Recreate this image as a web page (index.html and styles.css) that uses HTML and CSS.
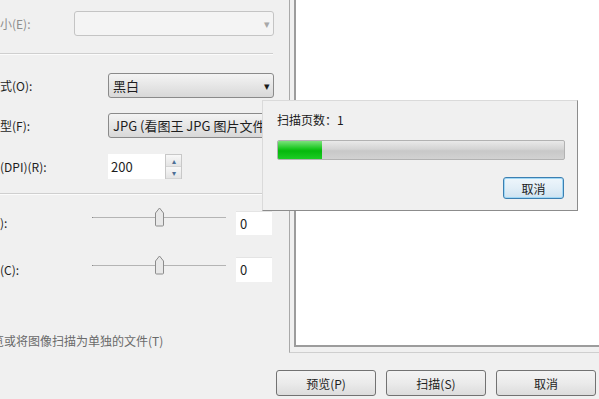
FILE: index.html
```html
<html lang="zh-CN">
<head>
    <meta charset="UTF-8">
    <link rel="stylesheet" href="styles.css">
    <title>扫描</title>
</head>
<body>
    <div class="Window">
        <div class="TopArea">
            <div class="LeftPane">
                <div class="Row Row1">
                    <span class="Label Disabled">小(E):</span>
                    <div class="Combo ComboDisabled"><span class="Arrow">&#9662;</span></div>
                </div>
                <div class="Sep Sep1"></div>
                <div class="Row Row2">
                    <span class="Label">式(O):</span>
                    <div class="Combo ComboWide"><span class="ComboText">黑白</span><span class="Arrow">&#9662;</span></div>
                </div>
                <div class="Row Row3">
                    <span class="Label">型(F):</span>
                    <div class="Combo ComboWide"><span class="ComboText">JPG (看图王 JPG 图片文件</span></div>
                </div>
                <div class="Row Row4">
                    <span class="Label">(DPI)(R):</span>
                    <div class="Spin">
                        <div class="SpinBox">200</div>
                        <div class="SpinBtns">
                            <div class="SpinBtn">&#9652;</div>
                            <div class="SpinBtn">&#9662;</div>
                        </div>
                    </div>
                </div>
                <div class="Sep Sep2"></div>
                <div class="Row Row5">
                    <span class="Label SliderLabel">):</span>
                    <div class="Slider">
                        <div class="Track"></div>
                        <svg class="Thumb" width="11" height="20" viewBox="0 0 11 20">
                            <path d="M1.5 6 L5.5 1 L9.5 6 L9.5 18 Q9.5 19 8.5 19 L2.5 19 Q1.5 19 1.5 18 Z" fill="#e8e8e8" stroke="#8c8c8c"/>
                        </svg>
                    </div>
                    <div class="NumBox">0</div>
                </div>
                <div class="Row Row6">
                    <span class="Label SliderLabel">(C):</span>
                    <div class="Slider">
                        <div class="Track"></div>
                        <svg class="Thumb" width="11" height="20" viewBox="0 0 11 20">
                            <path d="M1.5 6 L5.5 1 L9.5 6 L9.5 18 Q9.5 19 8.5 19 L2.5 19 Q1.5 19 1.5 18 Z" fill="#e8e8e8" stroke="#8c8c8c"/>
                        </svg>
                    </div>
                    <div class="NumBox">0</div>
                </div>
                <div class="Note">览或将图像扫描为单独的文件(T)</div>
            </div>
            <div class="PreviewWrap">
                <div class="Preview"></div>
            </div>
        </div>
        <div class="Footer">
            <button class="Btn">预览(P)</button>
            <button class="Btn">扫描(S)</button>
            <button class="Btn">取消</button>
        </div>

        <div class="Progress">
            <div class="ProgTitle">扫描页数：1</div>
            <div class="ProgBar"><div class="ProgFill"></div></div>
            <div class="ProgActions">
                <button class="DlgBtn">取消</button>
            </div>
        </div>
    </div>
</body>
</html>
```

FILE: styles.css
```css
body{
    margin: 0;
    background-color: #f0f0f0;
    font-family: "Noto Sans CJK SC", "Noto Sans", sans-serif;
    font-size: 12px;
    color: #1e1e1e;
    overflow: hidden;
}
.Window{
    position: relative;
    width: 599px;
    height: 399px;
    overflow: hidden;
}
.TopArea{
    display: flex;
    height: 366px;
}
.LeftPane{
    width: 287px;
    padding-top: 11px;
    box-sizing: border-box;
    overflow: hidden;
}
.Row{
    display: flex;
    align-items: center;
    height: 25px;
}
.Label{
    line-height: 16px;
}
.Disabled{
    color: #8e8e8e;
}
.Row1 .Label{
    width: 74px;
}
.Row2 .Label, .Row3 .Label, .Row4 .Label{
    width: 108px;
}
.Combo{
    position: relative;
    height: 25px;
    box-sizing: border-box;
    border: 1px solid #8a8a8a;
    border-radius: 3px;
    background: linear-gradient(#f4f4f4, #e6e6e6 50%, #d8d8d8);
    display: flex;
    align-items: center;
}
.ComboDisabled{
    width: 200px;
    border-color: #c4c4c4;
    background: #f4f4f4;
}
.ComboDisabled .Arrow{
    color: #a8a8a8;
}
.ComboWide{
    width: 166px;
}
.ComboText{
    padding-left: 4px;
    font-size: 13px;
    white-space: nowrap;
    line-height: 16px;
}
.Arrow{
    position: absolute;
    right: 3px;
    top: 4px;
    font-size: 11px;
    line-height: 14px;
    color: #1a1a1a;
}
.Sep{
    width: 273px;
    height: 1px;
    background-color: #cfcfcf;
    border-bottom: 1px solid #fbfbfb;
}
.Sep1{
    margin-top: 17px;
}
.Row2{
    margin-top: 18px;
}
.Row3{
    margin-top: 15px;
}
.Row4{
    margin-top: 16px;
}
.Sep2{
    margin-top: 14px;
}
.Row5{
    margin-top: 16px;
    height: 24px;
}
.Row6{
    margin-top: 22px;
}
.Spin{
    display: flex;
    height: 25px;
}
.SpinBox{
    width: 57px;
    box-sizing: border-box;
    background-color: #fff;
    padding-left: 3px;
    font-size: 13px;
    line-height: 25px;
}
.SpinBtns{
    width: 17px;
    display: flex;
    flex-direction: column;
    border: 1px solid #c8c8c8;
    box-sizing: border-box;
}
.SpinBtn{
    flex: 1;
    font-size: 8px;
    line-height: 11px;
    text-align: center;
    color: #4d6f96;
    background: linear-gradient(#f8f8f8, #e4e4e4);
    border-bottom: 1px solid #d4d4d4;
}
.SliderLabel{
    width: 92px;
}
.Slider{
    position: relative;
    width: 134px;
    height: 24px;
}
.Track{
    position: absolute;
    left: 0;
    right: 0;
    top: 6px;
    height: 1px;
    background-color: #b4b4b4;
    border-left: 1px solid #8a8a8a;
}
.Thumb{
    position: absolute;
    left: 62px;
    top: -4px;
}
.Row6 .Track{
    top: 7px;
}
.Row6 .Thumb{
    top: -3px;
}
.NumBox{
    margin-left: 10px;
    width: 36px;
    height: 24px;
    box-sizing: border-box;
    background-color: #fff;
    border-top: 1px solid #e4e4e4;
    padding-left: 4px;
    font-size: 13px;
    line-height: 23px;
}
.Row6 .NumBox{
    height: 25px;
}
.Note{
    margin-top: 51px;
    margin-left: -8px;
    color: #6a6a6a;
    line-height: 16px;
    white-space: nowrap;
}
.PreviewWrap{
    flex: 1;
    margin-left: 2px;
    height: 353px;
    box-sizing: border-box;
    border-left: 1px solid #a9a9a9;
    border-bottom: 1px solid #cfcfcf;
    padding: 0 0 5px 4px;
}
.Preview{
    height: 100%;
    box-sizing: border-box;
    background-color: #fff;
    border-left: 2px solid #9c9c9c;
    border-bottom: 2px solid #9c9c9c;
}
.Footer{
    display: flex;
    justify-content: flex-end;
    gap: 10px;
    padding-right: 3px;
    padding-top: 4px;
}
.Btn{
    width: 100px;
    height: 26px;
    border: 1px solid #727272;
    border-radius: 3px;
    background: linear-gradient(#f3f3f3, #ebebeb 50%, #dcdcdc);
    font-family: "Noto Sans CJK SC", sans-serif;
    font-size: 12px;
    color: #1e1e1e;
    padding: 0;
}
.Progress{
    position: absolute;
    left: 262px;
    top: 100px;
    width: 316px;
    height: 111px;
    box-sizing: border-box;
    background-color: #f0f0f0;
    border: 1px solid #dadada;
    border-right-color: #8c8c8c;
    border-bottom-color: #8c8c8c;
    padding: 11px 12px 0 14px;
}
.ProgTitle{
    line-height: 16px;
    color: #1a1a1a;
}
.ProgBar{
    margin-top: 12px;
    width: 288px;
    height: 20px;
    box-sizing: border-box;
    border: 1px solid #b2b2b2;
    border-radius: 2px;
    background: linear-gradient(#e9e9e9, #d4d4d4 45%, #c8c8c8 55%, #d2d2d2);
    overflow: hidden;
}
.ProgFill{
    width: 44px;
    height: 100%;
    background: linear-gradient(#7be27b, #14c51a 45%, #05b80c 55%, #1ccc24);
}
.ProgActions{
    display: flex;
    justify-content: flex-end;
    margin-top: 17px;
    padding-right: 1px;
}
.DlgBtn{
    width: 61px;
    height: 22px;
    border: 1px solid #3c7fb1;
    border-radius: 3px;
    box-shadow: inset 0 0 0 1px #9fd7f5;
    background: linear-gradient(#eef6fb, #e1eef7 50%, #cfe3f1);
    font-family: "Noto Sans CJK SC", sans-serif;
    font-size: 12px;
    color: #1a1a1a;
    padding: 0;
}
```
